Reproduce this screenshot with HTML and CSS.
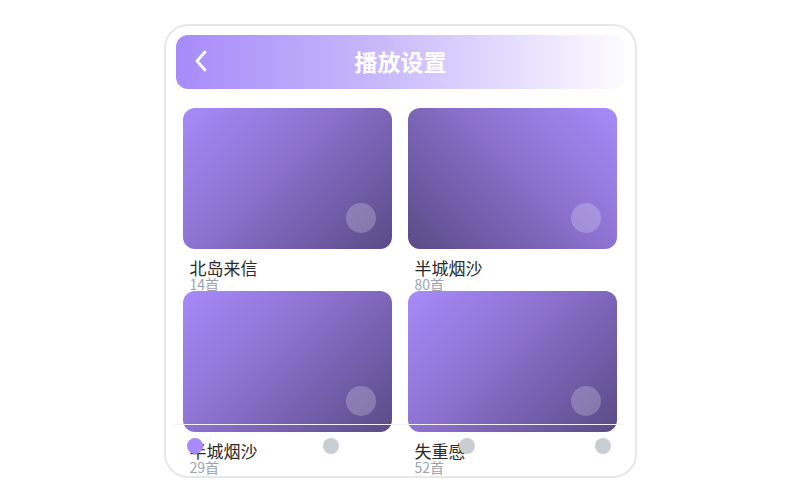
FILE: index.html
```html
<!DOCTYPE html>
<html lang="zh">

<head>
    <meta charset="UTF-8">
    <meta name="viewport" content="width=device-width, initial-scale=1.0">
    <title>播放设置</title>
    <link rel="stylesheet" href="styles.css">
</head>

<body>

    <div class="phone">
        <div class="header">
            <svg class="back" width="14" height="22" viewBox="0 0 14 22">
                <path d="M11 2 L3 11 L11 20" fill="none" stroke="#fff" stroke-width="2.8" stroke-linecap="round" stroke-linejoin="round" />
            </svg>
            <h1>播放设置</h1>
        </div>

        <div class="grid">
            <div class="album">
                <div class="cover">
                    <div class="play"></div>
                </div>
                <p class="name">北岛来信</p>
                <p class="count">14首</p>
            </div>
            <div class="album">
                <div class="cover flip">
                    <div class="play"></div>
                </div>
                <p class="name">半城烟沙</p>
                <p class="count">80首</p>
            </div>
            <div class="album">
                <div class="cover">
                    <div class="play"></div>
                </div>
                <p class="name">半城烟沙</p>
                <p class="count">29首</p>
            </div>
            <div class="album">
                <div class="cover">
                    <div class="play"></div>
                </div>
                <p class="name">失重感</p>
                <p class="count">52首</p>
            </div>
        </div>

        <div class="tabbar">
            <span class="dot active"></span>
            <span class="dot"></span>
            <span class="dot"></span>
            <span class="dot"></span>
        </div>
    </div>

</body>

</html>
```

FILE: styles.css
```css
body {
    margin: 0;
    background: #fff;
    font-family: "Noto Sans CJK SC", "Noto Sans", sans-serif;
}

.phone {
    position: relative;
    width: 468px;
    height: 450px;
    margin: 24px auto 0;
    padding-left: 1px;
    border: 2px solid #e5e7eb;
    border-radius: 24px;
    overflow: hidden;
    box-sizing: content-box;
}

.header {
    display: flex;
    align-items: center;
    justify-content: center;
    position: relative;
    height: 54px;
    margin: 9px 9px 0 9px;
    padding-bottom: 3px;
    box-sizing: border-box;
    border-radius: 12px;
    background: linear-gradient(90deg, #a78bfa 0%, #c9b8fb 45%, #fdfcff 100%);
}

.back {
    position: absolute;
    left: 18px;
    top: 15px;
}

.header h1 {
    margin: 0;
    color: #fff;
    font-size: 23px;
    line-height: 28px;
    font-weight: 700;
}

.grid {
    display: grid;
    grid-template-columns: 209px 209px;
    column-gap: 16px;
    padding: 19px 0 0 16px;
}

.cover {
    position: relative;
    height: 141px;
    border-radius: 12px;
    background: linear-gradient(135deg, #a78bfa 0%, #8a70cc 45%, #5b4a86 100%);
}

.cover.flip {
    background: linear-gradient(225deg, #a78bfa 0%, #8a70cc 45%, #5b4a86 100%);
}

.play {
    position: absolute;
    right: 16px;
    bottom: 16px;
    width: 30px;
    height: 30px;
    border-radius: 50%;
    background: rgba(255, 255, 255, 0.22);
}

.name {
    margin: 9px 0 0 7px;
    font-size: 17px;
    line-height: 19px;
    color: #2a2a2a;
}

.count {
    margin: 0 0 0 7px;
    font-size: 14px;
    line-height: 14px;
    color: #9ca3af;
}

.tabbar {
    position: absolute;
    left: 9px;
    right: 11px;
    top: 398px;
    display: flex;
    justify-content: space-between;
    padding: 13px 12px 0;
    border-top: 1px solid #f1f1f4;
}

.dot {
    width: 16px;
    height: 16px;
    border-radius: 50%;
    background: #c9cdd4;
}

.dot.active {
    background: #a78bfa;
}
```
